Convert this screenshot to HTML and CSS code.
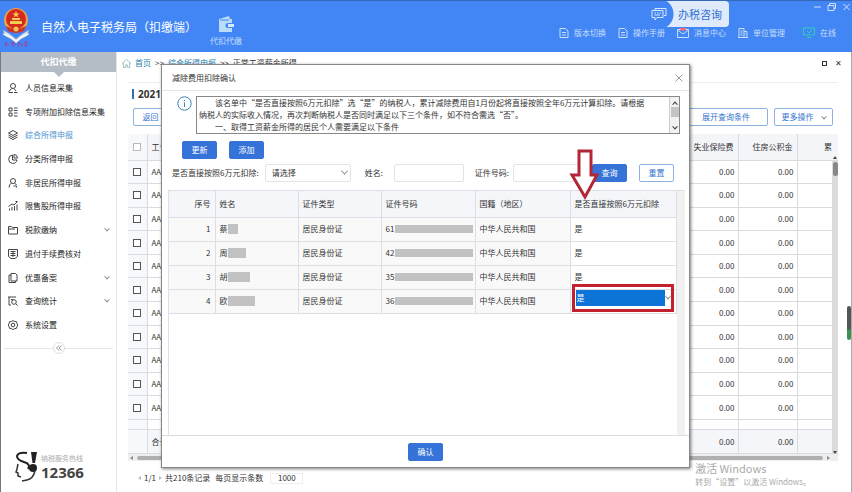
FILE: index.html
```html
<!DOCTYPE html>
<html lang="zh-CN">
<head>
  <meta charset="UTF-8" />
  <meta name="viewport" content="width=device-width, initial-scale=1.0" />
  <title>自然人电子税务局（扣缴端）</title>
  <link rel="stylesheet" href="styles.css">
</head>
<body>
  <header class="topbar">
    <svg class="emblem" viewBox="0 0 28 40">
      <path d="M1 23q6 3 13 9q7-6 13-9l-2 6q-6 2-11 7q-5-5-11-7z" fill="#dfe6f2" stroke="#8fa3c8" stroke-width=".6"/>
      <path d="M1 27q7 2 13 8q6-6 13-8" fill="none" stroke="#fff" stroke-width="1.2"/>
      <circle cx="14" cy="13" r="12" fill="#e9a34a"/>
      <circle cx="14" cy="12" r="10" fill="#d8281f"/>
      <path d="M14 4l1 2.400h2.500l-2 1.500.8 2.400-2.300-1.400-2.300 1.400.8-2.400-2-1.500h2.500zM8 14h12v3H8zM10 11h8v2h-8z" fill="#f6cf51"/>
      <path d="M4 19q10 6 20 0l-2 5q-8 4-16 0z" fill="#cf3427"/>
      <circle cx="14" cy="22" r="2.500" fill="#f0c44c"/>
      <path d="M2 37h5m-3-2v5m5-4l4-1m-2 0v5m-2-3h5m3-2l-1 5m0-3h4v3m2-5h4m-2 0v5m-2-2h4" fill="none" stroke="#8d4fae" stroke-width="1.200"/>
    </svg>
    <h1>自然人电子税务局（扣缴端）</h1>
    <a class="module" href="#">
      <svg width="18" height="17" viewBox="0 0 18 17"><path d="M2 3l10-3 1 3h2v4h-4a2.500 2.500 0 0 0 0 5h4v4H2z" fill="#b9dcfb"/><path d="M3 4h9" stroke="#4286f5"/><path d="M11 8h6v3h-6z" fill="#d6ebff"/></svg>
      代扣代缴
    </a>
    <nav class="tools">
      <a href="#"><svg width="10" height="10" viewBox="0 0 10 10"><path d="M1 .5h5.500l2.500 2.500v6.500h-8zM3 4.500h4M3 7h4"/></svg>版本切换</a>
      <a href="#"><svg width="10" height="10" viewBox="0 0 10 10"><path d="M1 .5h5.500l2.500 2.500v6.500h-8zM3 4.500h4M3 7h4"/></svg>操作手册</a>
      <a href="#"><svg width="12" height="10" viewBox="0 0 12 10"><path d="M.5 1.500h11v8H.5zM.5 2l5.500 4 5.500-4"/><path class="alert" d="M2 0h8L7 3H5z"/></svg>消息中心</a>
      <a href="#"><svg width="10" height="10" viewBox="0 0 10 10"><path d="M1 9.500v-9h5v9M6 3.500h3v6M0 9.500h10M2.500 3h2M2.500 5h2M2.500 7h2M7 6h1"/></svg>单位管理</a>
      <a class="online" href="#"><svg width="12" height="11" viewBox="0 0 12 11"><path d="M.5 1h11v7H.5zM4 10.500h4M4 4l2 2 3-3"/></svg>在线</a>
    </nav>
    <a class="consult" href="#">
      <svg width="16" height="15" viewBox="0 0 16 15"><path d="M4 3V1.500h11v7h-2M1 3.500h11v7H6l-2 2.500v-2.500H1z"/><path d="M3.500 6h1.500M6 6h1.500M8.500 6H10M3.500 8H9"/></svg>
      <span>办税咨询</span>
    </a>
    <svg class="winctl" viewBox="0 0 36 10"><path d="M0 5h7M14 3.500h6v5h-6zM15.500 3V1.500h6v5H20M29.500 2l6 6M35.500 2l-6 6"/></svg>
  </header>

  <div class="workspace">
    <aside class="sidebar">
      <h2>代扣代缴</h2>
      <ul>
        <li><a href="#"><svg viewBox="0 0 10 10"><circle cx="5" cy="3" r="2.500"/><path d="M3.500 5.500L1 8.500v1h4M6 5.500L8 8M6 9.500h3.500"/></svg>人员信息采集</a></li>
        <li><a href="#"><svg viewBox="0 0 10 10"><path d="M1 1h3v3H1zM1 6h3v3H1zM6 1h3.500M6 3.500h3.500M6 6h3.500M6 9h3.500"/></svg>专项附加扣除信息采集</a></li>
        <li><a class="active" href="#"><svg viewBox="0 0 10 10"><path d="M5 .5l4.500 2.500L5 5.500.5 3zM.5 5L5 7.500 9.500 5M.5 7L5 9.500 9.500 7"/></svg>综合所得申报</a></li>
        <li><a href="#"><svg viewBox="0 0 10 10"><path d="M4.500 1a4.200 4.200 0 1 0 4.500 5H4.500zM6 .5V4h3.500A3.500 3.500 0 0 0 6 .5"/></svg>分类所得申报</a></li>
        <li><a href="#"><svg viewBox="0 0 10 10"><circle cx="5" cy="3" r="2.500"/><path d="M3.500 5Q1 6.500 1 9.500M6.500 5Q8 6 8.500 7M5.500 8h3v1.500"/></svg>非居民所得申报</a></li>
        <li><a href="#"><svg viewBox="0 0 10 10"><path d="M1.500 9.500v-2M4 9.500V6M6.500 9.500V5M9 9.500V3.500M.5 5.500L4 3l2 1L9.500.5M7.500.5h2"/></svg>限售股所得申报</a></li>
        <li><a href="#"><svg viewBox="0 0 10 10"><path d="M.5 9V1.500h3l1 1h5V9zM.5 4H7"/></svg>税款缴纳</a><i class="chev"></i></li>
        <li><a href="#"><svg viewBox="0 0 10 10"><path d="M.5.5h9v7L7 9.500H3L.5 7.500zM2.500 2.500h5M2.500 4.500h5M2.500 6.500h5M5 2.500V8"/></svg>退付手续费核对</a></li>
        <li><a href="#"><svg viewBox="0 0 10 10"><path d="M3 .5h4.500L9 2v6H3zM3 2H1v7.500h6.500V8"/></svg>优惠备案</a><i class="chev"></i></li>
        <li><a href="#"><svg viewBox="0 0 10 10"><path d="M0 1h8M1 1v8h2M3 3.500h2"/><circle cx="6" cy="6" r="2.300"/><path d="M7.700 7.700l2 2"/></svg>查询统计</a><i class="chev"></i></li>
        <li><a href="#"><svg viewBox="0 0 10 10"><path d="M5 .5l1.500 1 2 .2.500 2L9.800 5 9 6.500l-.5 1.800-2 .3L5 9.700l-1.500-1.100-2-.3L1 6.500.2 5 1 3.700l.5-2 2-.2z"/><circle cx="5" cy="5" r="1.800"/></svg>系统设置</a></li>
      </ul>
      <div class="fold"><button type="button" aria-label="收起"><svg width="6" height="6" viewBox="0 0 6 6"><path d="M3 .5L.5 3 3 5.500M5.500.5L3 3l2.500 2.500"/></svg></button></div>
      <div class="hotline">
        <svg width="24" height="32" viewBox="0 0 24 32">
          <path d="M12 2Q3 1 2 5q0 4 7 6t4 7" fill="none" stroke="#222" stroke-width="2"/>
          <path d="M16 1h6l-2 11h-2.500z" fill="#222"/>
          <circle cx="18" cy="17" r="4" fill="#222"/>
          <path d="M3 13l-1 5-1 3 2 1v3l3 1M20 20q-2 8-8 9l-5 1" fill="none" stroke="#333" stroke-width="1.500"/>
        </svg>
        <div>
          <p>纳税服务热线</p>
          <strong>12366</strong>
        </div>
      </div>
    </aside>

    <main class="content">
      <div class="crumbs">
        <svg width="9" height="9" viewBox="0 0 10 10"><path d="M0 5l5-4.500L10 5M1.500 4v5.500h2.500V6.500h2v3h2.500V4"/></svg>
        <a href="#">首页</a> &gt;&gt; <a href="#">综合所得申报</a> &gt;&gt; <span>正常工资薪金所得</span>
        <span class="tabctl"><i></i>✕</span>
      </div>
      <section class="panel">
        <h3>2021</h3>
        <div class="actions">
          <button type="button" class="line">返回</button>
          <button type="button" class="line wide">展开查询条件</button>
          <button type="button" class="line more">更多操作<i class="chev"></i></button>
        </div>
        <div class="listing">
          <div class="grid">
            <table class="records">
              <thead>
                <tr><th class="tick"><input type="checkbox" aria-label="全选"></th><th class="code">工号</th><th></th><th class="money">失业保险费</th><th class="money">住房公积金</th><th class="rest">累</th></tr>
              </thead>
              <tbody>
                <tr><td class="tick"><input type="checkbox" aria-label="选择"></td><td class="code">AA</td><td></td><td>0.00</td><td>0.00</td><td></td></tr>
                <tr><td class="tick"><input type="checkbox" aria-label="选择"></td><td class="code">AA</td><td></td><td>0.00</td><td>0.00</td><td></td></tr>
                <tr><td class="tick"><input type="checkbox" aria-label="选择"></td><td class="code">AA</td><td></td><td>0.00</td><td>0.00</td><td></td></tr>
                <tr><td class="tick"><input type="checkbox" aria-label="选择"></td><td class="code">AA</td><td></td><td>0.00</td><td>0.00</td><td></td></tr>
                <tr><td class="tick"><input type="checkbox" aria-label="选择"></td><td class="code">AA</td><td></td><td>0.00</td><td>0.00</td><td></td></tr>
                <tr><td class="tick"><input type="checkbox" aria-label="选择"></td><td class="code">AA</td><td></td><td>0.00</td><td>0.00</td><td></td></tr>
                <tr><td class="tick"><input type="checkbox" aria-label="选择"></td><td class="code">AA</td><td></td><td>0.00</td><td>0.00</td><td></td></tr>
                <tr><td class="tick"><input type="checkbox" aria-label="选择"></td><td class="code">AA</td><td></td><td>0.00</td><td>0.00</td><td></td></tr>
                <tr><td class="tick"><input type="checkbox" aria-label="选择"></td><td class="code">AA</td><td></td><td>0.00</td><td>0.00</td><td></td></tr>
                <tr><td class="tick"><input type="checkbox" aria-label="选择"></td><td class="code">AA</td><td></td><td>0.00</td><td>0.00</td><td></td></tr>
                <tr><td class="tick"><input type="checkbox" aria-label="选择"></td><td class="code">AA</td><td></td><td>0.00</td><td>0.00</td><td></td></tr>
              </tbody>
              <tfoot>
                <tr class="spacer"><td class="tick"></td><td></td><td></td><td></td><td></td><td></td></tr>
                <tr class="total"><td class="tick"></td><td class="code">合计</td><td></td><td>0.00</td><td>0.00</td><td></td></tr>
              </tfoot>
            </table>
          </div>
          <div class="vscroll"><i class="up"></i><b></b><i class="down"></i></div>
        </div>
        <div class="hscroll"><i class="prev"></i><b></b><i class="next"></i></div>
      </section>
      <div class="pager">
        <i class="prev"></i> 1/1 <i class="next"></i>
        <span>共210条记录</span>
        <label for="pagesize">每页显示条数</label>
        <input id="pagesize" type="text" value="1000">
      </div>
    </main>
    <div class="winscroll"></div>
  </div>

  <div class="dialog" role="dialog" aria-labelledby="dlg-title">
    <div class="dialog-head">
      <h2 id="dlg-title">减除费用扣除确认</h2>
      <button type="button" class="close" aria-label="关闭"><svg width="8" height="8" viewBox="0 0 8 8"><path d="M.5.5l7 7M7.500.5l-7 7"/></svg></button>
    </div>
    <div class="dialog-body">
      <div class="notice">
        <svg width="15" height="15" viewBox="0 0 15 15"><circle cx="7.500" cy="7.500" r="6.700"/><path d="M7.500 6.500V11M7.500 4v1.200"/></svg>
        <div class="notice-box">
          <div class="notice-text">
            <p>该名单中“是否直接按照6万元扣除”选“是”的纳税人，累计减除费用自1月份起将直接按照全年6万元计算扣除。请根据<br>纳税人的实际收入情况，再次判断纳税人是否同时满足以下三个条件，如不符合需选“否”。</p>
            <p>一、取得工资薪金所得的居民个人需要满足以下条件</p>
          </div>
          <div class="notice-scroll"><i class="chev flip"></i><b></b><i class="chev"></i></div>
        </div>
      </div>
      <div class="edit">
        <button type="button" class="solid">更新</button>
        <button type="button" class="solid">添加</button>
      </div>
      <form class="filter">
        <label for="direct">是否直接按照6万元扣除:</label>
        <span class="pick"><select id="direct"><option>请选择</option><option>是</option><option>否</option></select><i class="chev"></i></span>
        <label for="pname" class="gap">姓名:</label>
        <input id="pname" type="text">
        <label for="idno" class="near">证件号码:</label>
        <input id="idno" class="idno" type="text">
        <button type="button" class="solid query">查询</button>
        <button type="button" class="line">重置</button>
      </form>
      <div class="people-wrap">
        <table class="people">
          <thead>
            <tr><th class="no">序号</th><th class="name">姓名</th><th class="type">证件类型</th><th class="cert">证件号码</th><th class="nation">国籍（地区）</th><th>是否直接按照6万元扣除</th></tr>
          </thead>
          <tbody>
            <tr><td class="no">1</td><td>蔡<s class="mask w1"></s></td><td>居民身份证</td><td><div class="idcell">61<s class="mask"></s></div></td><td>中华人民共和国</td><td class="edit-cell">是</td></tr>
            <tr><td class="no">2</td><td>周<s class="mask w2"></s></td><td>居民身份证</td><td><div class="idcell">42<s class="mask"></s></div></td><td>中华人民共和国</td><td class="edit-cell">是</td></tr>
            <tr><td class="no">3</td><td>胡<s class="mask w3"></s></td><td>居民身份证</td><td><div class="idcell">35<s class="mask"></s></div></td><td>中华人民共和国</td><td class="edit-cell">是</td></tr>
            <tr><td class="no">4</td><td>欧<s class="mask w4"></s></td><td>居民身份证</td><td><div class="idcell">36<s class="mask"></s></div></td><td>中华人民共和国</td><td class="edit-cell current"><span class="row-pick"><select aria-label="是否直接按照6万元扣除"><option>是</option><option>否</option></select><i class="chev"></i></span></td></tr>
          </tbody>
        </table>
        <div class="gutter"></div>
      </div>
    </div>
    <div class="dialog-foot"><button type="button" class="solid">确认</button></div>
    <svg class="pointer" width="32" height="52" viewBox="0 0 32 52"><path d="M10 2h12v24h6L16 48 3 26h7z"/></svg>
  </div>

  <div class="watermark"><p>激活 Windows</p><small>转到“设置”以激活 Windows。</small></div>
</body>
</html>
```
FILE: styles.css
```css
* { box-sizing: border-box; }
body {
  margin: 0;
  height: 100vh;
  display: flex;
  flex-direction: column;
  position: relative;
  overflow: hidden;
  font: 8px/12px "Noto Sans CJK SC", "Noto Sans", sans-serif;
  color: #333;
  background: #fff;
}
h1, h2, h3, p, ul { margin: 0; padding: 0; font-weight: normal; }
ul { list-style: none; }
a { color: inherit; text-decoration: none; }
button, input, select { font: inherit; color: inherit; margin: 0; }
svg { flex: none; fill: none; stroke: currentColor; }
.chev {
  display: inline-block;
  width: 5px;
  height: 5px;
  border: solid #888;
  border-width: 0 1px 1px 0;
  transform: rotate(45deg) translate(-1px, -1px);
}
.flip { transform: rotate(225deg) translate(-1px, -1px); }

/* top bar */
.topbar {
  position: relative;
  flex: none;
  height: 52px;
  display: flex;
  align-items: center;
  padding: 0 16px 0 2px;
  color: #fff;
  background: #4286f5;
  border-top: 1px solid #3767b8;
}
.topbar .emblem { width: 28px; height: 40px; stroke: none; }
.topbar h1 { margin-left: 11px; font-size: 12px; line-height: 18px; }
.module {
  display: flex;
  flex-direction: column;
  align-items: center;
  gap: 2px;
  margin-left: 13px;
  padding-top: 10px;
  color: #c4ddff;
}
.module svg { stroke: none; }
.tools {
  display: flex;
  gap: 12px;
  margin-left: auto;
  padding-top: 12px;
  color: #c9defc;
}
.tools a { display: flex; align-items: center; gap: 5px; }
.tools .alert { fill: #ee6b7c; stroke: none; }
.tools .online { margin-left: 6px; }
.online svg { color: #2fd0b0; }
.consult {
  position: absolute;
  top: 0;
  right: 123px;
  display: flex;
  align-items: center;
  height: 26px;
  font-size: 11px;
  color: #2f6fd0;
}
.consult svg { position: relative; color: #d8e8ff; }
.consult span {
  padding: 4px 7px 4px 16px;
  margin-left: -5px;
  line-height: 18px;
  border-radius: 0 4px 4px 0;
  background: radial-gradient(circle at -4px 50%, #4286f5 15px, #dfebfc 16px);
}
.winctl {
  position: absolute;
  top: 1px;
  right: 2px;
  width: 36px;
  height: 10px;
  color: #cfe0fb;
}

/* sidebar */
.workspace {
  flex: 1;
  min-height: 0;
  display: flex;
  border-left: 1px solid #777;
  border-right: 1px solid #aaa;
}
.sidebar {
  width: 116px;
  flex: none;
  display: flex;
  flex-direction: column;
  border-right: 1px solid #e6e6e6;
}
.sidebar h2 {
  position: relative;
  font-size: 9px;
  line-height: 20px;
  font-weight: bold;
  text-align: center;
  color: #fff;
  background: #b4bcc6;
}
.sidebar h2::after {
  content: "";
  position: absolute;
  top: 100%;
  left: 50%;
  margin-left: -5px;
  border: 5px solid transparent;
  border-top-color: #b4bcc6;
  border-bottom: 0;
}
.sidebar ul {
  display: grid;
  grid-auto-rows: 1fr;
  height: 261px;
  padding: 0 7px;
  margin-top: 4px;
}
.sidebar li { display: flex; align-items: center; justify-content: space-between; }
.sidebar a { display: flex; align-items: center; gap: 7px; color: #222; }
.sidebar a svg { width: 10px; height: 10px; stroke: #444; }
.sidebar a.active { color: #4b93cf; }
.sidebar .chev { width: 4px; height: 4px; }
.fold {
  display: flex;
  align-items: center;
  margin: 5px 3px 0;
}
.fold::before, .fold::after { content: ""; flex: 1; height: 1px; background: #e6e6e6; }
.fold button {
  display: flex;
  align-items: center;
  justify-content: center;
  width: 12px;
  height: 12px;
  padding: 0;
  color: #999;
  border: 1px solid #ddd;
  border-radius: 50%;
  background: #fff;
}
.hotline {
  display: flex;
  align-items: center;
  gap: 2px;
  margin-top: auto;
  padding: 0 0 9px 14px;
}
.hotline svg { stroke: none; }
.hotline p { font-size: 7px; line-height: 9px; color: #aaa; }
.hotline strong {
  display: block;
  font: bold 15px/18px "Noto Sans", sans-serif;
  color: #444;
}

/* page behind the dialog */
.content {
  flex: 1;
  min-width: 0;
  display: flex;
  flex-direction: column;
  padding: 0 5px 7px 5px;
}
.crumbs {
  display: flex;
  align-items: center;
  gap: 4px;
  height: 22px;
}
.crumbs svg { color: #9bb; }
.crumbs a { color: #2a7fb0; }
.tabctl { display: flex; align-items: center; gap: 8px; margin-left: auto; }
.tabctl i { width: 5px; height: 5px; border: 1px solid #333; }
.panel {
  flex: 1;
  min-height: 0;
  display: flex;
  flex-direction: column;
  margin: 8px 4px 0 6px;
  border-top: 1px solid #eee;
}
.panel h3 {
  margin: 6px 0 0 4px;
  padding-left: 4px;
  border-left: 2px solid #2f6fb5;
  font: bold 10px/10px "Noto Sans", sans-serif;
}
.actions { display: flex; gap: 6px; padding: 9px 5px 8px; }
button.line, button.solid {
  height: 18px;
  min-width: 35px;
  padding: 0 6px;
  line-height: 14px;
  border: 1px solid #8db2e0;
  border-radius: 2px;
  color: #3576cf;
  background: #fff;
}
button.solid { color: #fff; background: #3573d9; border-color: #3573d9; }
.actions .wide { margin-left: auto; min-width: 84px; }
.actions .more { min-width: 59px; }
.actions .chev { width: 4px; height: 4px; margin-left: 8px; }
.listing { flex: 1; min-height: 0; display: flex; }
.grid { flex: 1; min-width: 0; }
.records {
  width: 100%;
  height: 100%;
  table-layout: fixed;
  border-collapse: collapse;
}
.records th, .records td {
  padding: 0 3px;
  text-align: right;
  font-weight: normal;
  line-height: 10px;
  border: solid #d9dbe0;
  border-width: 0 1px 1px 0;
}
.records th { height: 26px; padding-right: 4px; background: #f4f5f9; }
.records th.rest { padding-right: 0; }
.records .tick { width: 19px; padding: 0 3px; text-align: center; background: #f6f8fb; }
.records .code { width: 60px; padding-left: 4px; text-align: left; }
.records .money { width: 59px; }
.records .rest { width: 35px; }
.records th:last-child, .records td:last-child { border-right: 0; }
.records input {
  appearance: none;
  display: block;
  width: 8px;
  height: 8px;
  margin: 0 auto;
  border: 1px solid #555;
  background: #fff;
}
.records th input { border-color: #bbb; }
.records .spacer { height: 10px; }
.records .total { height: 24px; background: #f4f6fa; }
.vscroll {
  width: 6px;
  display: flex;
  flex-direction: column;
  align-items: center;
  padding-top: 22px;
  background: linear-gradient(#f4f5f9 26px, #dcdcdc 26px);
}
.vscroll b { width: 5px; height: 14px; margin-top: 3px; border-radius: 3px; background: #888; }
.up, .down, .prev, .next { width: 0; height: 0; border: 2px solid transparent; }
.up { border-bottom: 3px solid #444; border-top: 0; }
.down { margin-top: auto; border-top: 3px solid #444; border-bottom: 0; }
.prev { border-right: 3px solid #888; border-left: 0; }
.next { border-left: 3px solid #888; border-right: 0; }
.hscroll {
  display: flex;
  align-items: center;
  gap: 4px;
  height: 7px;
  padding: 0 8px 0 2px;
  background: #eee;
}
.hscroll b { flex: 1; height: 4px; border-radius: 2px; background: #b0b0b0; }
.pager {
  display: flex;
  align-items: center;
  gap: 3px;
  height: 14px;
  margin: 10px 0 0 16px;
}
.pager .prev { border-right-color: #bbb; }
.pager .next { border-left-color: #bbb; }
.pager label { margin: 0 4px 0 2px; }
.pager input {
  width: 33px;
  height: 11px;
  padding: 0;
  text-align: center;
  border: 1px solid #eee;
}
.winscroll {
  width: 4px;
  height: 34px;
  margin-top: 254px;
  border-radius: 2px;
  background: linear-gradient(#555 23px, #3d9150 24px);
}

/* dialog */
.dialog {
  position: absolute;
  top: 64px;
  right: 162px;
  bottom: 24px;
  left: 161px;
  display: flex;
  flex-direction: column;
  background: #fff;
  border: 1px solid #888;
  box-shadow: 1px 1px 3px rgba(0, 0, 0, .5);
}
.dialog-head {
  display: flex;
  align-items: center;
  justify-content: space-between;
  height: 26px;
  padding: 0 5px 0 10px;
  border-bottom: 1px solid #e4e4e4;
}
.dialog-head h2 { font-size: 8px; }
.close { display: flex; padding: 1px; border: 0; background: none; color: #999; }
.dialog-body {
  flex: 1;
  min-height: 0;
  display: flex;
  flex-direction: column;
  padding: 5px 4px 0 6px;
}
.notice { display: flex; gap: 4px; padding: 0 5px 0 9px; }
.notice svg { color: #3c83b8; }
.notice-box {
  flex: 1;
  display: flex;
  height: 38px;
  border: 1px solid #888;
}
.notice-text { flex: 1; padding: 0 2px; overflow: hidden; white-space: nowrap; }
.notice-text p { text-indent: 16px; }
.notice-scroll {
  width: 10px;
  display: flex;
  flex-direction: column;
  align-items: center;
  justify-content: space-between;
  padding: 4px 0 3px;
  border-left: 1px solid #ccc;
  background: #f2f2f2;
}
.notice-scroll .chev { width: 4px; height: 4px; border-color: #333; }
.notice-scroll b { width: 8px; height: 10px; margin-bottom: 7px; background: #c4c4c4; }
.edit { display: flex; gap: 12px; padding: 7px 14px 0; }
.filter { display: flex; align-items: center; margin: 5px 0 8px 4px; }
.filter input, .filter select {
  width: 70px;
  height: 18px;
  padding: 0 6px;
  border: 1px solid #e3e3e3;
  border-radius: 2px;
  background: #fff;
}
.filter select, .row-pick select { appearance: none; }
.pick { position: relative; margin-left: 6px; }
.filter .pick select { display: block; width: 86px; }
.pick .chev { position: absolute; top: 6px; right: 4px; }
.filter .gap { width: 29px; margin-left: 14px; }
.filter .near { width: 38px; margin-left: 11px; }
.filter .idno { flex: 1; min-width: 0; }
.filter .query { margin-right: 12px; }
.filter .line { margin-right: 11px; }
.people-wrap {
  flex: 1;
  display: flex;
  align-items: flex-start;
  border: solid #dcdfe5;
  border-width: 1px 0 0 1px;
}
.people { flex: 1; table-layout: fixed; border-collapse: collapse; }
.people th, .people td {
  height: 24px;
  padding: 0 4px;
  text-align: left;
  font-weight: normal;
  line-height: 10px;
  border: solid #dcdee3;
  border-width: 0 1px 1px 0;
  background: #f9f9f9;
}
.people th { height: 26px; background: #f4f6fa; }
.people .no { width: 46px; text-align: right; }
.people .name, .people .type { width: 83px; }
.people .cert { width: 94px; }
.people .nation { width: 95px; }
.people td.edit-cell { background: #fff; }
.people td.current { padding: 0 1px; }
.gutter { align-self: stretch; width: 8px; background: #f1f1f1; }
.mask { display: inline-block; height: 10px; vertical-align: middle; background: #c2c2c2; }
.w1 { width: 10px; }
.w2 { width: 18px; }
.w3 { width: 22px; }
.w4 { width: 27px; }
.idcell { display: flex; align-items: center; gap: 1px; }
.idcell .mask { flex: 1; height: 8px; margin-right: -2px; }
.row-pick {
  position: relative;
  display: flex;
  align-items: center;
  gap: 1px;
  margin: -8px 1px -2px 0;
  padding: 3px 1px;
  border: 3px solid #c5202e;
}
.row-pick select {
  flex: 1;
  height: 16px;
  padding: 0 1px;
  border: 0;
  color: #fff;
  background: #0b74d6;
}
.row-pick .chev { width: 4px; height: 4px; }
.dialog-foot {
  flex: none;
  height: 32px;
  padding-top: 7px;
  text-align: center;
  border-top: 1px solid #dcdcdc;
}
.pointer {
  position: absolute;
  top: 84px;
  right: 88px;
}
.pointer path { fill: #fff; stroke: #b32636; stroke-width: 3; }

.watermark {
  position: absolute;
  right: 41px;
  bottom: 4px;
  color: #aaa;
}
.watermark p { font-size: 11px; line-height: 16px; }
.watermark small { font-size: 8px; line-height: 12px; }
```
